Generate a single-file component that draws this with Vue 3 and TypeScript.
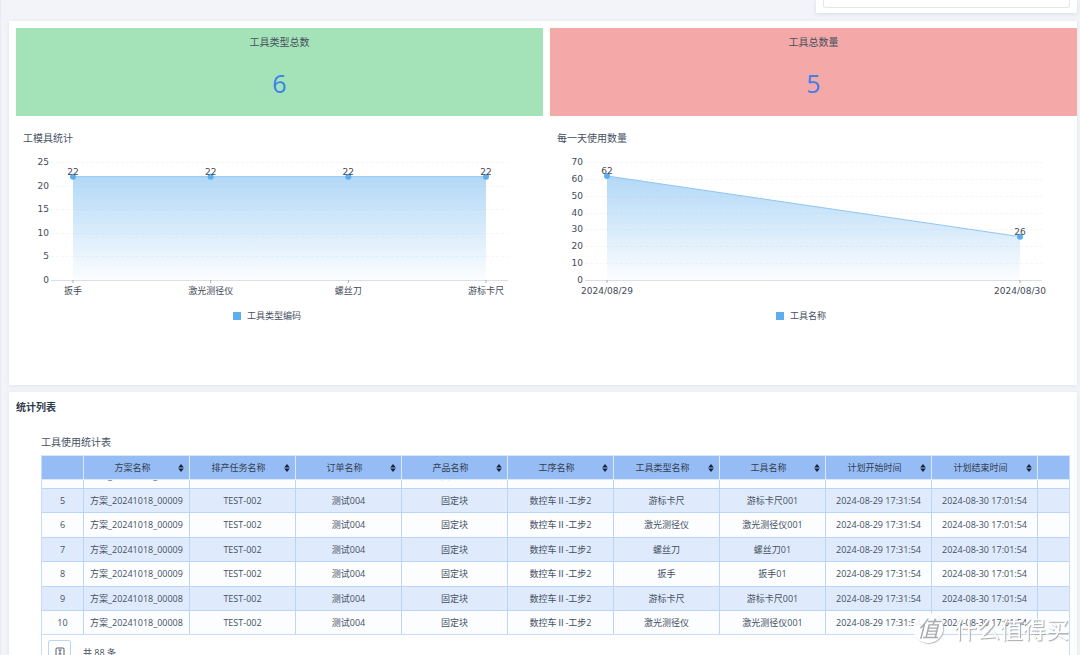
<script setup lang="ts">
import { computed, onBeforeUnmount, onMounted, ref } from 'vue'

interface Point {
  label: string
  value: number
}

interface Chart {
  id: string
  title: string
  legend: string
  max: number
  step: number
  points: Point[]
}

const stats = [
  { label: '工具类型总数', value: 6, tone: 'green' },
  { label: '工具总数量', value: 5, tone: 'red' },
]

const charts: Chart[] = [
  {
    id: 'types',
    title: '工模具统计',
    legend: '工具类型编码',
    max: 25,
    step: 5,
    points: [
      { label: '扳手', value: 22 },
      { label: '激光测径仪', value: 22 },
      { label: '螺丝刀', value: 22 },
      { label: '游标卡尺', value: 22 },
    ],
  },
  {
    id: 'daily',
    title: '每一天使用数量',
    legend: '工具名称',
    max: 70,
    step: 10,
    points: [
      { label: '2024/08/29', value: 62 },
      { label: '2024/08/30', value: 26 },
    ],
  },
]

// Plot geometry, in pixels of the chart's own box
const TOP = 14
const BASE = 132
const AXIS_INSET = 35
const POINT_INSET = 57

// The list opens part of the way down, past the first rows
const START_SCROLL = 16

const chartsEl = ref<HTMLElement | null>(null)
const chartWidth = ref(527)
const scroller = ref<HTMLElement | null>(null)
let observer: ResizeObserver | undefined

function measure() {
  const svg = chartsEl.value?.querySelector('.plot')
  if (svg) chartWidth.value = Math.round(svg.getBoundingClientRect().width)
}

onMounted(() => {
  measure()
  observer = new ResizeObserver(measure)
  if (chartsEl.value) observer.observe(chartsEl.value)
  if (scroller.value) scroller.value.scrollTop = START_SCROLL
})
onBeforeUnmount(() => observer?.disconnect())

const plots = computed(() =>
  charts.map((c) => {
    const y = (v: number) => BASE - (v / c.max) * (BASE - TOP)
    const span = chartWidth.value - POINT_INSET * 2
    const pts = c.points.map((p, i) => ({
      ...p,
      x: POINT_INSET + (span * i) / (c.points.length - 1),
      y: y(p.value) + 0.5,
    }))
    const ticks = Array.from({ length: c.max / c.step + 1 }, (_, i) => ({
      value: i * c.step,
      y: Math.round(y(i * c.step)),
    }))
    const line = pts.map((p) => `${p.x},${p.y}`).join(' ')
    const area = `${pts[0].x},${BASE} ${line} ${pts[pts.length - 1].x},${BASE}`
    return { ...c, pts, ticks, line, area }
  }),
)

const columns = [
  '方案名称',
  '排产任务名称',
  '订单名称',
  '产品名称',
  '工序名称',
  '工具类型名称',
  '工具名称',
  '计划开始时间',
  '计划结束时间',
]

const tools: [number, string, string, string][] = [
  [4, '方案_20241018_00009', '扳手', '扳手01'],
  [5, '方案_20241018_00009', '游标卡尺', '游标卡尺001'],
  [6, '方案_20241018_00009', '激光测径仪', '激光测径仪001'],
  [7, '方案_20241018_00009', '螺丝刀', '螺丝刀01'],
  [8, '方案_20241018_00009', '扳手', '扳手01'],
  [9, '方案_20241018_00008', '游标卡尺', '游标卡尺001'],
  [10, '方案_20241018_00008', '激光测径仪', '激光测径仪001'],
]

const rows = tools.map(([no, plan, kind, tool]) => ({
  no,
  cells: [
    plan,
    'TEST-002',
    '测试004',
    '固定块',
    '数控车Ⅱ-工步2',
    kind,
    tool,
    '2024-08-29 17:31:54',
    '2024-08-30 17:01:54',
  ],
}))
</script>

<template>
  <main class="page">
    <div class="filter"><div class="filter-box"></div></div>

    <section class="card overview">
      <div class="pair">
        <div v-for="s in stats" :key="s.label" class="stat" :class="s.tone">
          <div class="stat-label">{{ s.label }}</div>
          <div class="stat-value">{{ s.value }}</div>
        </div>
      </div>
      <div ref="chartsEl" class="pair">
        <div v-for="c in plots" :key="c.id" class="chart">
          <h3 class="chart-title">{{ c.title }}</h3>
          <svg class="plot" role="img" :aria-label="c.title">
            <defs>
              <linearGradient :id="`fill-${c.id}`" x1="0" y1="0" x2="0" y2="1">
                <stop offset="0" stop-color="#5eaeee" stop-opacity="0.48" />
                <stop offset="1" stop-color="#5eaeee" stop-opacity="0.02" />
              </linearGradient>
            </defs>
            <g v-for="t in c.ticks" :key="t.value">
              <line
                v-if="t.value"
                class="grid"
                :x1="AXIS_INSET"
                :x2="chartWidth - AXIS_INSET"
                :y1="t.y + 0.5"
                :y2="t.y + 0.5"
              />
              <text class="tick" text-anchor="end" x="33" :y="t.y + 3">{{ t.value }}</text>
            </g>
            <polygon :points="c.area" :fill="`url(#fill-${c.id})`" />
            <line
              class="axis"
              :x1="AXIS_INSET"
              :x2="chartWidth - AXIS_INSET"
              :y1="BASE + 0.5"
              :y2="BASE + 0.5"
            />
            <polyline class="line" :points="c.line" />
            <g v-for="p in c.pts" :key="p.label">
              <line class="mark" :x1="p.x" :x2="p.x" :y1="BASE" :y2="BASE + 3" />
              <circle class="dot" :cx="p.x" :cy="p.y" r="3" />
              <text class="tick" text-anchor="middle" :x="p.x" :y="p.y - 2">{{ p.value }}</text>
              <text class="tick" text-anchor="middle" :x="p.x" :y="BASE + 14">{{ p.label }}</text>
            </g>
          </svg>
          <div class="legend"><i class="swatch"></i>{{ c.legend }}</div>
        </div>
      </div>
    </section>

    <section class="card list">
      <h2 class="list-title">统计列表</h2>
      <div class="report">
        <h3 class="report-title">工具使用统计表</h3>
        <div class="frame">
          <div ref="scroller" class="scroller">
            <table>
              <colgroup>
                <col class="col-no" />
                <col v-for="c in columns" :key="c" class="col-data" />
                <col />
              </colgroup>
              <thead>
                <tr>
                  <th></th>
                  <th v-for="c in columns" :key="c" scope="col">
                    <div class="head">
                      <span>{{ c }}</span>
                      <button type="button" class="sort" :aria-label="`${c} 排序`">
                        <svg width="6" height="8" viewBox="0 0 6 8">
                          <path d="M3 0 5.8 3.4H.2zM3 8 .2 4.6h5.6z" />
                        </svg>
                      </button>
                    </div>
                  </th>
                  <th></th>
                </tr>
              </thead>
              <tbody>
                <tr v-for="r in rows" :key="r.no" :class="{ striped: r.no % 2 === 1 }">
                  <td>{{ r.no }}</td>
                  <td v-for="(cell, i) in r.cells" :key="i">{{ cell }}</td>
                  <td></td>
                </tr>
              </tbody>
            </table>
          </div>
          <footer class="foot">
            <button type="button" class="columns-btn" aria-label="列设置">
              <svg width="10" height="10" viewBox="0 0 10 10">
                <rect x="1" y="1" width="8" height="8" rx="1" />
                <path d="M3.5 3h3M3.5 7h3M5 3v4" />
              </svg>
            </button>
            <span>共 88 条</span>
          </footer>
        </div>
      </div>
    </section>

    <div class="watermark">
      <span class="seal">值</span>
      <span class="brand">什么值得买</span>
    </div>
  </main>
</template>

<style>
body {
  margin: 0;
  overflow: hidden;
}
</style>

<style scoped>
.page {
  position: relative;
  box-sizing: border-box;
  height: 100vh;
  overflow: hidden;
  padding: 0 3px 0 8px;
  border-left: 1px solid #e9ebf0;
  background: #f3f4f9;
  color: #46505f;
  font-family: 'Open Sans', 'Noto Sans CJK SC', sans-serif;
  font-size: 9px;
  line-height: 14px;
}

h2,
h3 {
  margin: 0;
  font-size: 10px;
  font-weight: 400;
}

button {
  padding: 0;
  font: inherit;
  cursor: pointer;
}

.filter {
  box-sizing: border-box;
  width: 261px;
  height: 13px;
  margin: 0 0 8px auto;
  padding: 0 7px 5px;
  background: #fff;
  box-shadow: 0 1px 4px rgba(40, 50, 90, 0.12);
}

.filter-box {
  box-sizing: border-box;
  height: 8px;
  border: 1px solid #e4e6eb;
  border-top: 0;
  border-radius: 0 0 3px 3px;
}

.card {
  background: #fff;
  box-shadow: 0 1px 5px rgba(40, 50, 90, 0.08);
}

.overview {
  box-sizing: border-box;
  min-height: 364px;
  margin-bottom: 7px;
  padding: 7px 0 0 7px;
}

.pair {
  display: grid;
  grid-template-columns: 1fr 1fr;
  gap: 7px;
}

.stat {
  box-sizing: border-box;
  height: 88px;
  padding-top: 7px;
  text-align: center;
}

.green {
  background: #a4e3b8;
}

.red {
  background: #f5a8a8;
}

.stat-label {
  font-size: 10px;
}

.stat-value {
  margin-top: 16px;
  color: #3a80ee;
  font-size: 25px;
  line-height: 36px;
}

.chart {
  min-width: 0;
  padding-top: 15px;
}

.chart-title {
  padding-left: 7px;
}

.plot {
  display: block;
  width: 100%;
  height: 160px;
  margin-top: 3px;
}

.tick {
  fill: #444958;
  font-family: 'DejaVu Sans', 'Noto Sans CJK SC', sans-serif;
  font-size: 9px;
}

.grid {
  stroke: #f5f6f8;
  stroke-dasharray: 3 2;
}

.axis {
  stroke: #dcdee3;
}

.mark {
  stroke: #a9adb6;
}

.line {
  fill: none;
  stroke: #8ec6f3;
}

.dot {
  fill: #5eaeee;
}

.legend {
  display: flex;
  align-items: center;
  justify-content: center;
  gap: 6px;
  margin-top: 1px;
  padding-right: 25px;
}

.swatch {
  width: 8px;
  height: 8px;
  background: #5eaeee;
}

.list {
  padding: 8px 7px 0 7px;
}

.list-title {
  color: #2d3a4b;
  font-weight: 700;
}

.report {
  padding: 21px 0 0 25px;
}

.frame {
  margin-top: 6px;
  border: 1px solid #c7dcfa;
  border-top-color: #d8e7fd;
}

.scroller {
  height: 178px;
  overflow: hidden;
}

table {
  width: 100%;
  table-layout: fixed;
  border-collapse: separate;
  border-spacing: 0;
}

.col-no {
  width: 42px;
}

.col-data {
  width: 106px;
}

th,
td {
  box-sizing: border-box;
  padding: 0;
  border-right: 1px solid #b9d5fa;
  border-bottom: 1px solid #b9d5fa;
  text-align: center;
  white-space: nowrap;
}

th:last-child,
td:last-child {
  border-right: 0;
}

th {
  position: sticky;
  top: 0;
  height: 24px;
  border-color: #dbe9fd;
  background: #96bcf5;
  color: #333e50;
  font-weight: 400;
}

td {
  height: 25px;
  background: #fbfdff;
}

.striped td {
  height: 24px;
  background: #dfebfc;
}

.head {
  display: flex;
  align-items: center;
  padding: 0 5px 0 3px;
}

.head span {
  flex: 1;
}

.sort {
  display: flex;
  border: 0;
  background: none;
}

.sort path {
  fill: #172438;
}

.foot {
  display: flex;
  align-items: flex-start;
  gap: 12px;
  padding: 5px 6px;
  border-top: 1px solid #c7dcfa;
  line-height: 26px;
}

.columns-btn {
  box-sizing: border-box;
  display: flex;
  align-items: center;
  justify-content: center;
  width: 23px;
  height: 23px;
  border: 1px solid #bcd6fa;
  border-radius: 2px;
  background: #fff;
}

.columns-btn svg {
  fill: none;
  stroke: #525c6b;
}

.watermark {
  position: absolute;
  right: 11px;
  bottom: 12px;
  display: flex;
  align-items: center;
  gap: 11px;
  color: #fff;
  font-family: 'Noto Sans CJK SC', sans-serif;
  pointer-events: none;
}

.seal {
  width: 30px;
  height: 30px;
  border-radius: 50%;
  background: rgba(255, 255, 255, 0.9);
  box-shadow: 1px 1px 1px #b9bbbe;
  color: #a9abae;
  font-size: 22px;
  font-style: italic;
  line-height: 28px;
  text-align: center;
}

.brand {
  font-size: 23px;
  line-height: 30px;
  text-shadow: 1px 1px 1px #a4a6a9;
}
</style>
